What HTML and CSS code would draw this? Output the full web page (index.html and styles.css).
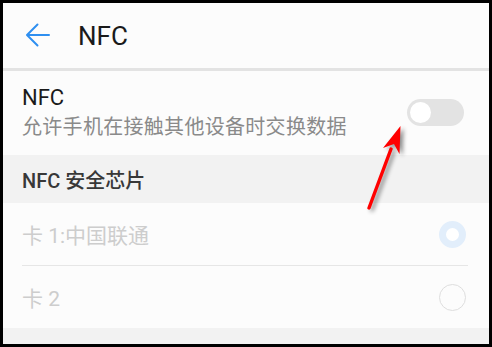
FILE: index.html
```html
<!DOCTYPE html>
<html lang="zh">
<head>
<meta charset="utf-8">
<link rel="stylesheet" href="styles.css">
</head>
<body>
<div class="screen">
  <header class="topbar">
    <svg class="back" width="26" height="26" viewBox="0 0 26 26">
      <path d="M24 13H2.5M12.5 2.5L2 13l10.5 10.5" fill="none" stroke="#2f8ff0" stroke-width="2" stroke-linecap="round" stroke-linejoin="round"/>
    </svg>
    <h1 class="title">NFC</h1>
  </header>
  <section class="nfc-row">
    <div class="nfc-text">
      <div class="label">NFC</div>
      <div class="sub">允许手机在接触其他设备时交换数据</div>
    </div>
    <div class="toggle"><span class="knob"></span></div>
  </section>
  <div class="group-head">NFC 安全芯片</div>
  <div class="card-list">
    <div class="card-row">
      <span class="card-name">卡 1:中国联通</span>
      <span class="radio on"></span>
    </div>
    <div class="divider"></div>
    <div class="card-row">
      <span class="card-name">卡 2</span>
      <span class="radio"></span>
    </div>
  </div>
  <svg class="pointer" width="492" height="347" viewBox="0 0 492 347">
    <line x1="369" y1="208" x2="391" y2="149" stroke="#ff0000" stroke-width="3.4" stroke-linecap="round"/>
    <polygon points="400.5,126 399.5,154 394,144 383,148" fill="#ff0000"/>
  </svg>
</div>
</body>
</html>
```

FILE: styles.css
```css
html, body {
  margin: 0;
  padding: 0;
}
body {
  background: #000;
  padding: 3px;
  font-family: "Roboto", "Noto Sans CJK SC", sans-serif;
}
.screen {
  position: relative;
  width: 486px;
  height: 341px;
  background: #f2f2f2;
  overflow: hidden;
}
.topbar {
  height: 65px;
  background: #fcfcfc;
  border-bottom: 3px solid #e3e3e3;
  display: flex;
  align-items: center;
  padding-left: 22px;
  box-sizing: content-box;
}
.back {
  display: block;
  margin-top: -1px;
}
.title {
  margin: 0 0 0 27px;
  font-size: 26px;
  font-weight: 400;
  color: #1a1a1a;
  line-height: 1;
}
.nfc-row {
  height: 84px;
  background: #fcfcfc;
  display: flex;
  align-items: center;
  justify-content: space-between;
  padding: 0 25px 0 19px;
}
.nfc-text {
  display: flex;
  flex-direction: column;
  margin-top: -2px;
}
.label {
  font-size: 22px;
  color: #1a1a1a;
  line-height: 30px;
}
.sub {
  font-size: 20px;
  color: #8a8a8a;
  line-height: 28px;
  letter-spacing: 0.3px;
}
.toggle {
  width: 57px;
  height: 27px;
  border-radius: 14px;
  background: #e3e3e3;
  display: flex;
  align-items: center;
  padding-left: 3px;
  box-sizing: border-box;
  margin-top: -1px;
}
.knob {
  width: 21px;
  height: 21px;
  border-radius: 50%;
  background: #fff;
}
.group-head {
  height: 48px;
  display: flex;
  align-items: center;
  padding-left: 19px;
  font-size: 20px;
  font-weight: 500;
  color: #383838;
}
.card-list {
  background: #fcfcfc;
}
.card-row {
  height: 62px;
  display: flex;
  align-items: center;
  justify-content: space-between;
  padding: 0 23px 0 19px;
}
.card-name {
  font-size: 21px;
  color: #cdcdcd;
}
.divider {
  height: 1px;
  background: #e6e6e6;
  margin: 0 21px 0 19px;
}
.radio {
  width: 27px;
  height: 27px;
  border-radius: 50%;
  box-sizing: border-box;
  border: 1.5px solid #dedede;
}
.radio.on {
  border: 7.5px solid #e2eefb;
  background: #fff;
}
.pointer {
  position: absolute;
  left: -3px;
  top: -3px;
  filter: drop-shadow(3px 2px 2px rgba(0,0,0,0.45));
}
```
